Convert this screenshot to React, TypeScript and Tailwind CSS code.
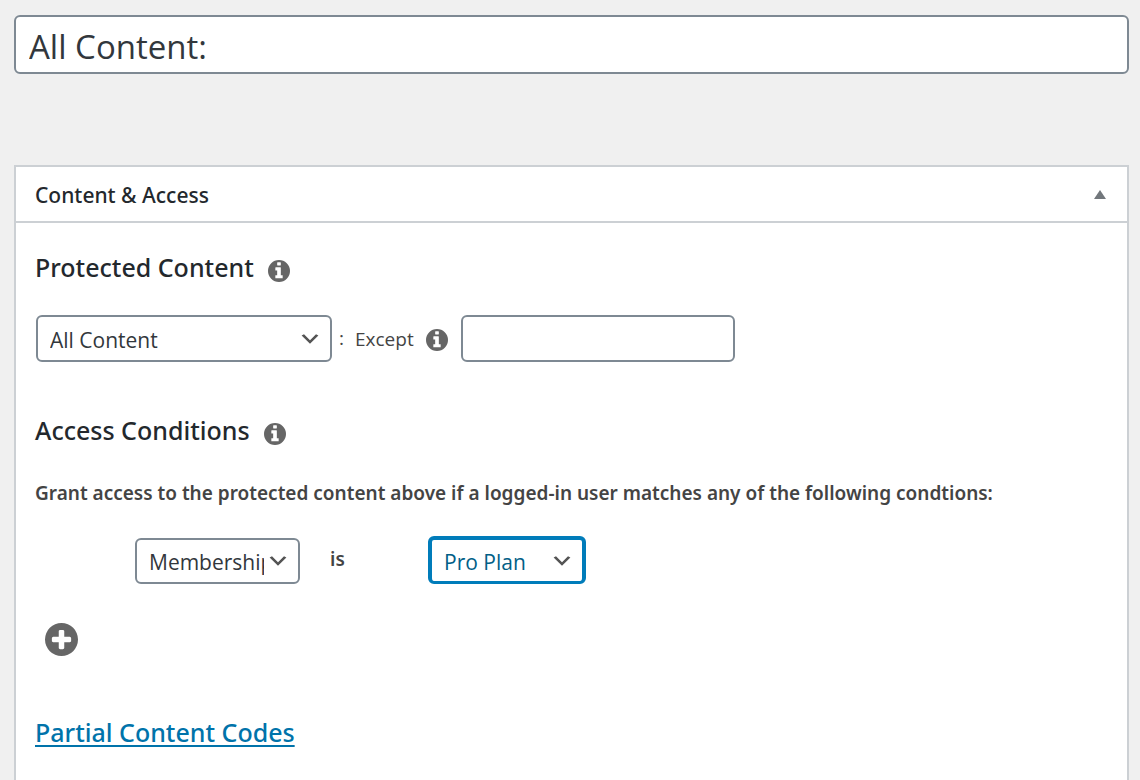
import { useState, type SelectHTMLAttributes } from "react";

type SelectFieldProps = SelectHTMLAttributes<HTMLSelectElement> & {
  label: string;
  options: string[];
  frame: string;
};

function SelectField({ label, options, frame, ...rest }: SelectFieldProps) {
  return (
    <span className={`grid items-center overflow-hidden bg-white ${frame}`}>
      <select
        aria-label={label}
        className="col-start-1 row-start-1 h-full w-full appearance-none overflow-hidden bg-transparent pt-1 pr-[34px] pl-3 outline-none"
        {...rest}
      >
        {options.map((option) => (
          <option key={option}>{option}</option>
        ))}
      </select>
      <svg
        viewBox="0 0 20 20"
        className="pointer-events-none col-start-1 row-start-1 mr-2 size-6 justify-self-end fill-[#555555]"
        aria-hidden="true"
      >
        <path d="M5 6l5 5 5-5 2 1-7 7-7-7 2-1z" />
      </svg>
    </span>
  );
}

function InfoButton({ label }: { label: string }) {
  return (
    <button type="button" aria-label={label}>
      <svg viewBox="0 128 1536 1536" className="size-[22px] fill-[#666666]" aria-hidden="true">
        <path
          fillRule="evenodd"
          d="M0 896a768 768 0 1 0 1536 0a768 768 0 1 0 -1536 0zM1024 1376v-160q0-14-9-23t-23-9h-96v-512q0-14-9-23t-23-9h-320q-14 0-23 9t-9 23v160q0 14 9 23t23 9h96v320h-96q-14 0-23 9t-9 23v160q0 14 9 23t23 9h448q14 0 23-9t9-23zM896 480v-160q0-14-9-23t-23-9h-192q-14 0-23 9t-9 23v160q0 14 9 23t23 9h192q14 0 23-9t9-23z"
        />
      </svg>
    </button>
  );
}

export default function App() {
  const [title, setTitle] = useState("All Content:");

  return (
    <main className="min-h-screen bg-[#f0f0f0] pt-[15px] pr-[11px] pl-[14px] font-['Open_Sans','Noto_Sans',sans-serif] text-[19px] text-[#444444]">
      <input
        aria-label="Rule title"
        value={title}
        onChange={(event) => setTitle(event.target.value)}
        className="block h-[59px] w-full rounded-md border-2 border-[#7e8993] bg-white px-[13px] pt-1 text-[33px] text-[#32373c] outline-none"
      />

      <section className="mt-[91px] flex min-h-[615px] flex-col border-2 border-b-0 border-[#ccd0d4] bg-white">
        <header className="flex h-14 items-center justify-between border-b-2 border-[#ccd0d4] pr-[21px] pl-[19px]">
          <h2 className="pt-1 font-['Noto_Sans','Open_Sans',sans-serif] text-[21px] font-medium text-[#23282d]">
            Content &amp; Access
          </h2>
          <button type="button" aria-label="Toggle panel">
            <svg viewBox="0 0 12 9" className="h-[9px] w-3 fill-[#72777c]" aria-hidden="true">
              <path d="M6 0l6 9H0z" />
            </svg>
          </button>
        </header>

        <div className="px-[19px] pt-[27px]">
          <div className="flex h-9 items-center gap-[14px]">
            <h3 className="font-['Noto_Sans','Open_Sans',sans-serif] text-[25px] font-medium text-[#23282d]">
              Protected Content
            </h3>
            <span className="flex pt-1.5">
              <InfoButton label="About protected content" />
            </span>
          </div>

          <div className="mt-[29px] flex items-center pl-px">
            <SelectField
              label="Protected content"
              options={["All Content", "A Single Page", "A Single Post"]}
              frame="h-[47px] w-[296px] rounded-md border-2 border-[#7e8993] text-[21px] text-[#32373c]"
            />
            <span className="w-[23px] pl-[7px]">:</span>
            <label htmlFor="except" className="w-[58px] pt-0.5">
              Except
            </label>
            <span className="mx-[13px] flex pt-0.5">
              <InfoButton label="About exceptions" />
            </span>
            <input
              id="except"
              className="h-[47px] w-[274px] rounded-md border-2 border-[#7e8993] bg-white px-3 text-[21px] outline-none"
            />
          </div>

          <div className="mt-[51px] flex h-9 items-center gap-[14px]">
            <h3 className="font-['Noto_Sans','Open_Sans',sans-serif] text-[25px] font-medium text-[#23282d]">
              Access Conditions
            </h3>
            <span className="flex pt-1.5">
              <InfoButton label="About access conditions" />
            </span>
          </div>

          <p className="mt-7 font-['Noto_Sans','Open_Sans',sans-serif] leading-8 font-semibold">
            Grant access to the protected content above if a logged-in user matches any of the following condtions:
          </p>

          <div className="mt-[27px] flex h-12 items-end pl-[100px]">
            <SelectField
              label="Condition type"
              options={["Membership", "Member", "Role"]}
              frame="h-[46px] w-[165px] rounded-md border-2 border-[#7e8993] text-[21px] text-[#32373c]"
            />
            <span className="w-[128px] self-center pb-0.5 pl-[30px] font-['Noto_Sans','Open_Sans',sans-serif] font-semibold">
              is
            </span>
            <SelectField
              label="Membership plan"
              options={["Pro Plan", "Basic Plan"]}
              frame="h-12 w-[158px] rounded-md border-4 border-b-[3px] border-[#007cba] text-[21px] text-[#016087]"
            />
          </div>

          <button type="button" aria-label="Add condition" className="mt-[39px] ml-[10px] block">
            <svg viewBox="0 128 1536 1536" className="size-[33px] fill-[#666666]" aria-hidden="true">
              <path
                fillRule="evenodd"
                d="M0 896a768 768 0 1 0 1536 0a768 768 0 1 0 -1536 0zM1216 960v-128q0-26-19-45t-45-19h-256v-256q0-26-19-45t-45-19h-128q-26 0-45 19t-19 45v256h-256q-26 0-45 19t-19 45v128q0 26 19 45t45 19h256v256q0 26 19 45t45 19h128q26 0 45-19t19-45v-256h256q26 0 45-19t19-45z"
              />
            </svg>
          </button>

          <h3 className="mt-[58px] font-['Noto_Sans','Open_Sans',sans-serif] text-[25px] leading-9 font-medium">
            <a href="#partial" className="text-[#0073aa] underline decoration-2 underline-offset-[3px]">
              Partial Content Codes
            </a>
          </h3>
        </div>
      </section>
    </main>
  );
}
